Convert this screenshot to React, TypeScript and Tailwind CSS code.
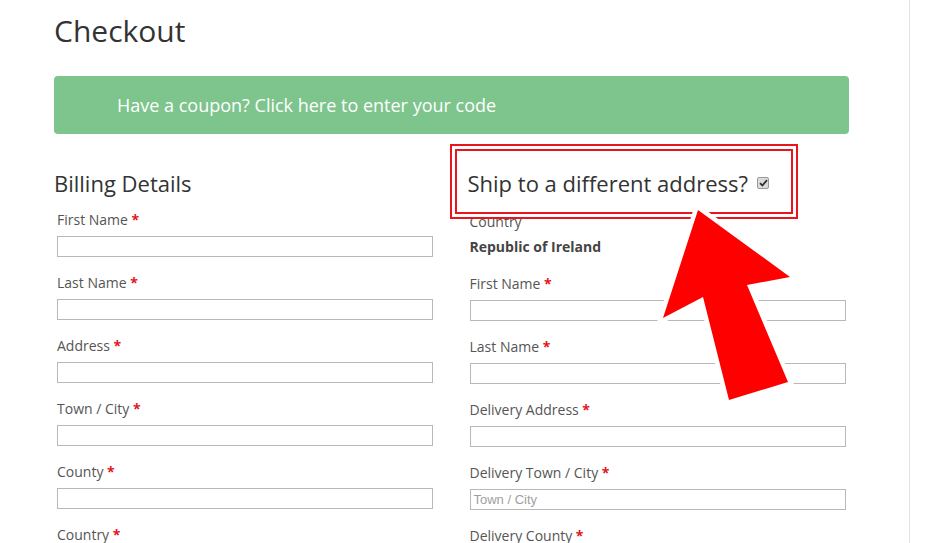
import React from "react";

const Star = () => <span className="text-[#e5131d] font-bold"> *</span>;

function Field({ label, placeholder, req = true }: { label: string; placeholder?: string; req?: boolean }) {
  return (
    <div className="pl-[3px]">
      <div className="text-[14px] leading-[21px] text-[#555] mb-[6px]">
        {label}
        {req && <Star />}
      </div>
      <div className="w-[376px] h-[21px] border border-[#b8b8b8] mb-[15px] flex items-center pl-[3px]">
        {placeholder && (
          <span className="text-[13px] text-[#a0a0a0]" style={{ fontFamily: '"Liberation Sans", Arial, sans-serif' }}>
            {placeholder}
          </span>
        )}
      </div>
    </div>
  );
}

export default function App() {
  return (
    <div
      className="relative h-[543px] w-[933px] overflow-hidden bg-white flex"
      style={{ fontFamily: '"Open Sans", "Noto Sans", sans-serif' }}
    >
      <div className="ml-[54px] w-[795px]">
        <h1 className="text-[30px] leading-[40px] text-[#333] mt-[11px] font-normal">Checkout</h1>
        <div className="mt-[25px] h-[58px] rounded-[4px] bg-[#7dc58c] flex items-center pl-[63px] text-white text-[18px]">
          Have a coupon? Click here to enter your code
        </div>
        <div className="grid grid-cols-2 gap-x-[32px] mt-[34px]">
          <div>
            <h3 className="text-[22px] leading-[30px] text-[#333] mb-[11px]">Billing Details</h3>
            <Field label="First Name" />
            <Field label="Last Name" />
            <Field label="Address" />
            <Field label="Town / City" />
            <Field label="County" />
            <Field label="Country" />
          </div>
          <div>
            <h3 className="text-[22px] leading-[30px] text-[#333] mb-[14px] flex items-center">
              Ship to a different address?
              <span className="ml-[9px] shrink-0 w-[12px] h-[12px] bg-[#dcdcdc] border border-[#9a9a9a] rounded-[2px] flex items-center justify-center">
                <svg width="9" height="8" viewBox="0 0 9 8">
                  <path d="M1 4.2 L3.4 6.5 L8 1.2" fill="none" stroke="#333" strokeWidth="1.8" />
                </svg>
              </span>
            </h3>
            <div className="pl-[2px]">
              <div className="text-[14px] leading-[20px] text-[#555]">Country</div>
              <div className="text-[14px] leading-[20px] text-[#444] font-bold mt-[5px] mb-[16px]">Republic of Ireland</div>
            </div>
            <div className="-ml-px">
              <Field label="First Name" />
              <Field label="Last Name" />
              <Field label="Delivery Address" />
              <Field label="Delivery Town / City" placeholder="Town / City" />
              <Field label="Delivery County" />
            </div>
          </div>
        </div>
      </div>
      <div className="ml-[60px] w-px h-full bg-[#e3e3e3]" />

      <div className="absolute left-[455px] top-[149px] w-[338px] h-[65px] border-2 border-[#e8151c] shadow-[0_0_0_3px_#ffffff,0_0_0_5px_#e8151c]" />

      <svg className="absolute left-0 top-0 pointer-events-none" width="933" height="543" viewBox="0 0 933 543">
        <polygon
          points="698,210 790,277 747,285 788,382 729,400 703,297 663,318"
          fill="#ff0000"
          stroke="#ffffff"
          strokeWidth="9"
          strokeLinejoin="miter"
          paintOrder="stroke"
        />
      </svg>
    </div>
  );
}
